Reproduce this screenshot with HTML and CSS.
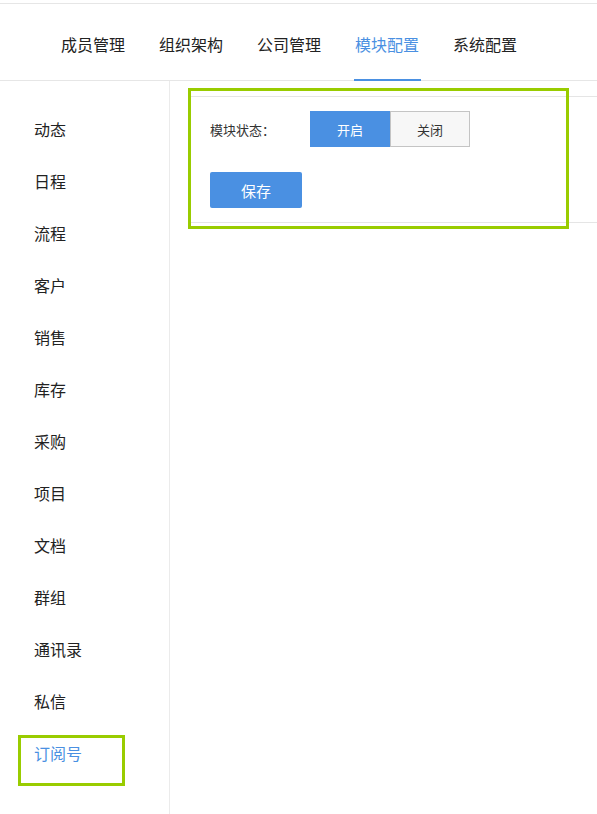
FILE: index.html
```html
<!DOCTYPE html>
<html lang="zh">
<head>
<meta charset="utf-8">
<title>模块配置</title>
<link rel="stylesheet" href="styles.css">
</head>
<body>
<div class="page">
  <div class="header">
    <div class="tab">成员管理</div>
    <div class="tab">组织架构</div>
    <div class="tab">公司管理</div>
    <div class="tab active">模块配置</div>
    <div class="tab">系统配置</div>
  </div>
  <div class="content">
    <div class="sidebar">
      <div class="side-item">动态</div>
      <div class="side-item">日程</div>
      <div class="side-item">流程</div>
      <div class="side-item">客户</div>
      <div class="side-item">销售</div>
      <div class="side-item">库存</div>
      <div class="side-item">采购</div>
      <div class="side-item">项目</div>
      <div class="side-item">文档</div>
      <div class="side-item">群组</div>
      <div class="side-item">通讯录</div>
      <div class="side-item">私信</div>
      <div class="side-item active">订阅号</div>
    </div>
    <div class="main">
      <div class="panel">
        <div class="row">
          <div class="label">模块状态：</div>
          <div class="seg">
            <div class="seg-btn on">开启</div>
            <div class="seg-btn off">关闭</div>
          </div>
        </div>
        <div class="save">保存</div>
      </div>
    </div>
  </div>
  <div class="mark mark-panel"></div>
  <div class="mark mark-item"></div>
</div>
</body>
</html>
```
FILE: styles.css
```css
* { box-sizing: border-box; }
html, body { margin: 0; padding: 0; background: #fff; }
body {
  font-family: "Noto Sans CJK SC", "Noto Sans", sans-serif;
  color: #333;
}
.page {
  position: relative;
  width: 597px;
  height: 814px;
  padding-top: 3px;
  overflow: hidden;
}
.header {
  display: flex;
  height: 78px;
  padding-left: 44px;
  border-top: 1px solid #e6e6e6;
  border-bottom: 1px solid #e6e6e6;
}
.tab {
  position: relative;
  padding: 5px 17px 0;
  line-height: 70px;
  font-size: 16px;
  color: #222;
}
.tab.active { color: #4a90e2; }
.tab.active::after {
  content: "";
  position: absolute;
  left: 16px;
  right: 15px;
  bottom: -1px;
  height: 2px;
  background: #4a90e2;
}
.content {
  display: flex;
  height: 733px;
}
.sidebar {
  width: 170px;
  flex: none;
  border-right: 1px solid #ebebeb;
  padding-top: 22px;
}
.side-item {
  height: 52px;
  line-height: 52px;
  padding-left: 34px;
  font-size: 16px;
  color: #222;
}
.side-item.active { color: #4a90e2; }
.main {
  flex: 1;
  padding: 15px 0 0 21px;
}
.panel {
  border-top: 1px solid #e5e5e5;
  border-bottom: 1px solid #e5e5e5;
  padding: 14px 0 14px 19px;
}
.row {
  display: flex;
  align-items: center;
  height: 36px;
}
.label {
  width: 100px;
  font-size: 13px;
  color: #333;
}
.seg { display: flex; }
.seg-btn {
  width: 80px;
  height: 36px;
  display: flex;
  align-items: center;
  justify-content: center;
  font-size: 13px;
}
.seg-btn.on { background: #4a90e2; color: #fff; }
.seg-btn.off {
  background: #f7f7f7;
  border: 1px solid #c4c4c4;
  color: #333;
}
.save {
  margin-top: 25px;
  width: 92px;
  height: 36px;
  border-radius: 2px;
  background: #4a90e2;
  color: #fff;
  font-size: 15px;
  display: flex;
  align-items: center;
  justify-content: center;
}
.mark {
  position: absolute;
  border: 3px solid #99cc00;
}
.mark-panel { left: 188px; top: 88px; width: 381px; height: 141px; }
.mark-item { left: 18px; top: 735px; width: 107px; height: 51px; }
```
